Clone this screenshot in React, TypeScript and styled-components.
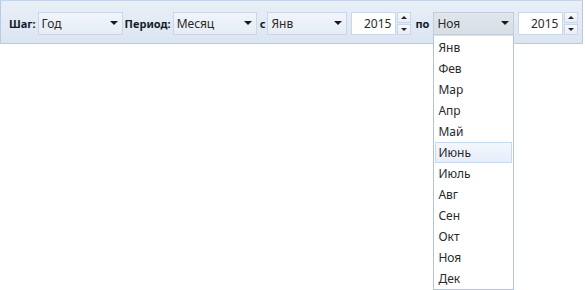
import styled, { createGlobalStyle } from "styled-components";

const months = ["Янв", "Фев", "Мар", "Апр", "Май", "Июнь", "Июль", "Авг", "Сен", "Окт", "Ноя", "Дек"];

export default function App() {
    return (
        <>
            <GlobalStyle />
            <Page>
                <Toolbar>
                    <Label>Шаг:</Label>
                    <Combo $w={85}>
                        <span>Год</span>
                        <Arrow />
                    </Combo>
                    <Label>Период:</Label>
                    <Combo $w={84}>
                        <span>Месяц</span>
                        <Arrow />
                    </Combo>
                    <Label $ml={1}>с</Label>
                    <Combo $w={80}>
                        <span>Янв</span>
                        <Arrow />
                    </Combo>
                    <Spin $ml={2}>
                        <SpinInput>2015</SpinInput>
                        <SpinButtons>
                            <SpinBtn><Tri $up /></SpinBtn>
                            <SpinBtn><Tri /></SpinBtn>
                        </SpinButtons>
                    </Spin>
                    <Label $ml={2} $mr={2}>по</Label>
                    <ComboWrap>
                        <Combo $w={81} $open>
                            <span>Ноя</span>
                            <Arrow />
                        </Combo>
                        <List>
                            {months.map((m) => (
                                <Item key={m} $active={m === "Июнь"}>{m}</Item>
                            ))}
                        </List>
                    </ComboWrap>
                    <Spin $ml={2}>
                        <SpinInput>2015</SpinInput>
                        <SpinButtons>
                            <SpinBtn><Tri $up /></SpinBtn>
                            <SpinBtn><Tri /></SpinBtn>
                        </SpinButtons>
                    </Spin>
                </Toolbar>
            </Page>
        </>
    );
}

const GlobalStyle = createGlobalStyle`
    html, body, #root {
        height: 100%;
    }
    body {
        margin: 0;
        background: #fff;
        font-family: "Noto Sans", "Open Sans", sans-serif;
        font-size: 12px;
        color: #222;
    }
`;

const Page = styled.div`
    width: 585px;
    height: 290px;
`;

const Toolbar = styled.div`
    display: flex;
    align-items: center;
    gap: 2px;
    width: 583px;
    height: 44px;
    box-sizing: border-box;
    padding: 2px 0 0 8px;
    border: 1px solid #b8cbe3;
    border-top-color: #c5d5ea;
    background: linear-gradient(#e9eff7, #dbe5f2);
`;

const Label = styled.span<{ $ml?: number; $mr?: number }>`
    font-size: 11px;
    font-weight: bold;
    color: #141c28;
    white-space: nowrap;
    margin-left: ${(p) => p.$ml ?? 0}px;
    margin-right: ${(p) => p.$mr ?? 0}px;
`;

const ComboWrap = styled.div`
    position: relative;
    z-index: 5;
`;

const Combo = styled.div<{ $w: number; $open?: boolean }>`
    display: flex;
    align-items: center;
    justify-content: space-between;
    box-sizing: border-box;
    width: ${(p) => p.$w}px;
    height: 23px;
    padding: 0 4px 0 3px;
    border: 1px solid ${(p) => (p.$open ? "#c3ccd8" : "#cad7e8")};
    background: ${(p) => (p.$open ? "linear-gradient(#e1e6ec, #d8dee6)" : "linear-gradient(#f1f5fa, #e6edf6)")};
    color: #2a2a2a;
`;

const Arrow = styled.i`
    width: 0;
    height: 0;
    border-left: 4px solid transparent;
    border-right: 4px solid transparent;
    border-top: 4px solid #1a1a1a;
`;

const List = styled.div`
    position: absolute;
    top: 23px;
    left: 0;
    width: 81px;
    box-sizing: border-box;
    padding: 1px 1px 0;
    border: 1px solid #b0c4de;
    border-top: 1px solid #d6dfeb;
    background: #fff;
`;

const Item = styled.div<{ $active?: boolean }>`
    height: 21px;
    line-height: 19px;
    box-sizing: border-box;
    padding-left: 2px;
    border: 1px solid ${(p) => (p.$active ? "#c8daf2" : "transparent")};
    background: ${(p) => (p.$active ? "linear-gradient(#f3f7fd, #e6eef9)" : "transparent")};
    color: #2a2a2a;
`;

const Spin = styled.div<{ $ml: number }>`
    display: flex;
    align-items: center;
    gap: 1px;
    margin-left: ${(p) => p.$ml}px;
`;

const SpinInput = styled.div`
    box-sizing: border-box;
    width: 45px;
    height: 23px;
    line-height: 21px;
    padding-right: 4px;
    text-align: right;
    border: 1px solid #cad7e8;
    background: #fff;
    color: #2a2a2a;
`;

const SpinButtons = styled.div`
    display: flex;
    flex-direction: column;
    gap: 1px;
`;

const SpinBtn = styled.div`
    display: flex;
    align-items: center;
    justify-content: center;
    box-sizing: border-box;
    width: 14px;
    height: 11px;
    border: 1px solid #cad7e8;
    background: linear-gradient(#f6f9fc, #e8eef6);
`;

const Tri = styled.i<{ $up?: boolean }>`
    width: 0;
    height: 0;
    border-left: 3px solid transparent;
    border-right: 3px solid transparent;
    ${(p) => (p.$up ? "border-bottom: 3px solid #222;" : "border-top: 3px solid #222;")}
`;
